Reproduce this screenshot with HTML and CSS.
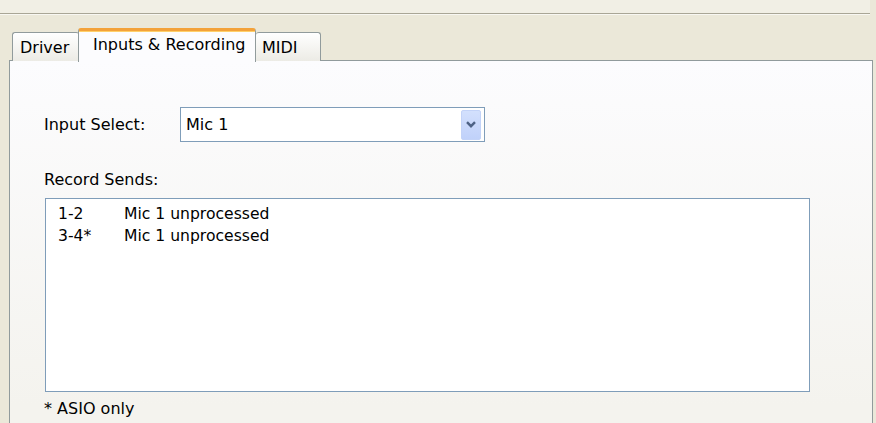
FILE: index.html
```html
<!DOCTYPE html>
<html>
<head>
<meta charset="utf-8">
<link rel="stylesheet" href="styles.css">
</head>
<body>
<div class="window">
  <div class="topbar"></div>
  <div class="tabs">
    <div class="tab tab-driver">Driver</div>
    <div class="tab tab-active">Inputs &amp; Recording</div>
    <div class="tab tab-midi">MIDI</div>
  </div>
  <div class="panel">
    <div class="row-select">
      <span class="label-select">Input Select:</span>
      <div class="combo">
        <span class="combo-text">Mic 1</span>
        <span class="combo-btn">
          <svg width="10" height="7" viewBox="0 0 10 7"><path d="M1 1.2 L5 5.2 L9 1.2" fill="none" stroke="#4d6185" stroke-width="2.4"/></svg>
        </span>
      </div>
    </div>
    <div class="label-sends">Record Sends:</div>
    <div class="listbox">
      <div class="list-row"><span class="col-ch">1-2</span><span>Mic 1 unprocessed</span></div>
      <div class="list-row"><span class="col-ch">3-4*</span><span>Mic 1 unprocessed</span></div>
    </div>
    <div class="note">* ASIO only</div>
  </div>
</div>
</body>
</html>
```
FILE: styles.css
```css
html, body {
  margin: 0;
  padding: 0;
  overflow: hidden;
}
body {
  width: 876px;
  height: 423px;
  background: #ebe8d9;
  font-family: "DejaVu Sans", "Verdana", sans-serif;
  font-size: 16px;
  color: #000;
}
.window {
  display: flex;
  flex-direction: column;
  height: 423px;
}
.topbar {
  height: 13px;
  background: #f1efe5;
  border-bottom: 1px solid #a9a696;
  box-shadow: 0 1px 0 #f8f7f2;
  margin-right: 6px;
}
.tabs {
  display: flex;
  align-items: flex-end;
  height: 33px;
  margin-top: 14px;
  padding-left: 12px;
  margin-bottom: -1px;
  position: relative;
  z-index: 1;
}
.tab {
  box-sizing: border-box;
  height: 29px;
  border: 1px solid #919b9c;
  border-bottom: none;
  border-radius: 3px 3px 0 0;
  background: linear-gradient(#ffffff, #ecebe5);
  line-height: 26px;
  white-space: nowrap;
}
.tab-driver {
  width: 67px;
  padding-left: 7px;
  padding-top: 2px;
  border-right: none;
}
.tab-active {
  width: 178px;
  height: 34px;
  padding-left: 14px;
  padding-top: 2px;
  border: 1px solid #919b9c;
  border-top: 3px solid #f3a23a;
  border-bottom: none;
  box-shadow: inset 0 1px 0 #ffd06a;
  background: #fcfcfe;
  line-height: 24px;
  margin-left: -1px;
  margin-bottom: -1px;
}
.tab-midi {
  width: 65px;
  padding-left: 6px;
  padding-top: 2px;
  border-left: none;
}
.panel {
  box-sizing: border-box;
  margin-left: 9px;
  width: 864px;
  flex: 1;
  border: 1px solid #919b9c;
  border-bottom: none;
  background: linear-gradient(#fcfcfe, #f4f3ee 95%);
  padding-left: 34px;
  padding-top: 46px;
}
.row-select {
  display: flex;
  align-items: center;
}
.label-select {
  width: 136px;
}
.combo {
  box-sizing: border-box;
  width: 305px;
  height: 35px;
  border: 1px solid #7f9db9;
  background: #fff;
  display: flex;
  align-items: center;
  padding: 0 3px 0 5px;
}
.combo-text {
  flex: 1;
}
.combo-btn {
  box-sizing: border-box;
  width: 20px;
  height: 30px;
  border: 1px solid #c3d3f8;
  border-radius: 2px;
  background: linear-gradient(#d3e0fd, #c0d1fa);
  display: flex;
  align-items: center;
  justify-content: center;
}
.label-sends {
  line-height: 20px;
  margin-top: 28px;
}
.listbox {
  box-sizing: border-box;
  margin-top: 8px;
  margin-left: 1px;
  width: 765px;
  height: 194px;
  border: 1px solid #7f9db9;
  background: #fff;
  padding: 4px 0 0 12px;
  font-size: 15.6px;
}
.list-row {
  display: flex;
  line-height: 22px;
}
.col-ch {
  width: 66px;
}
.note {
  line-height: 20px;
  margin-top: 7px;
}
```
